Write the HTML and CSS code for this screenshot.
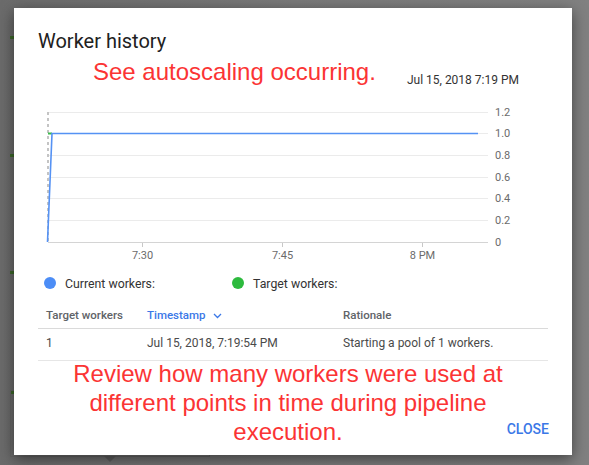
FILE: index.html
```html
<!DOCTYPE html>
<html>
<head>
<meta charset="utf-8">
<link rel="stylesheet" href="styles.css">
</head>
<body>
<div class="backdrop" aria-hidden="true">
  <span class="mark m1"></span>
  <span class="mark m2"></span>
  <span class="mark m3"></span>
  <span class="mark m4"></span>
  <span class="under-box"></span>
  <span class="under-tri"></span>
</div>
<div class="dialog">
  <h1 class="title">Worker history</h1>
  <div class="annot-row">
    <div class="annot">See autoscaling occurring.</div>
    <div class="date">Jul 15, 2018 7:19 PM</div>
  </div>
  <svg class="chart" width="510" height="162" viewBox="0 0 510 162">
    <g class="grid">
      <line x1="10" y1="10.5" x2="450" y2="10.5"/>
      <line x1="10" y1="31.5" x2="450" y2="31.5"/>
      <line x1="10" y1="53.5" x2="450" y2="53.5"/>
      <line x1="10" y1="75.5" x2="450" y2="75.5"/>
      <line x1="10" y1="96.5" x2="450" y2="96.5"/>
      <line x1="10" y1="118.5" x2="450" y2="118.5"/>
    </g>
    <line class="axis" x1="10" y1="140.5" x2="450" y2="140.5"/>
    <g class="ticks">
      <line x1="104.5" y1="141" x2="104.5" y2="145"/>
      <line x1="244.5" y1="141" x2="244.5" y2="145"/>
      <line x1="384.5" y1="141" x2="384.5" y2="145"/>
    </g>
    <g class="ylab">
      <text x="457" y="14">1.2</text>
      <text x="457" y="35">1.0</text>
      <text x="457" y="57">0.8</text>
      <text x="457" y="79">0.6</text>
      <text x="457" y="100">0.4</text>
      <text x="457" y="122">0.2</text>
      <text x="457" y="144">0</text>
    </g>
    <g class="xlab">
      <text x="104.5" y="157">7:30</text>
      <text x="244.5" y="157">7:45</text>
      <text x="384.5" y="157">8 PM</text>
    </g>
    <line class="now" x1="10" y1="10" x2="10" y2="140"/>
    <polyline class="target" points="10,31.5 14,31.5"/>
    <polyline class="current" points="9.5,140 14,31.5 440,31.5"/>
  </svg>
  <div class="legend">
    <div class="legend-item"><span class="dot dot-blue"></span>Current workers:</div>
    <div class="legend-item"><span class="dot dot-green"></span>Target workers:</div>
  </div>
  <div class="table">
    <div class="row head">
      <div class="cell">Target workers</div>
      <div class="cell sorted">Timestamp
        <svg class="chev" width="9" height="6" viewBox="0 0 9 6"><path d="M1 1 L4.5 4.5 L8 1"/></svg>
      </div>
      <div class="cell">Rationale</div>
    </div>
    <div class="row body">
      <div class="cell">1</div>
      <div class="cell">Jul 15, 2018, 7:19:54 PM</div>
      <div class="cell">Starting a pool of 1 workers.</div>
    </div>
  </div>
  <div class="footer">
    <div class="annot annot-center">Review how many workers were used at<br>different points in time during pipeline<br>execution.</div>
    <button class="close">CLOSE</button>
  </div>
</div>
</body>
</html>
```
FILE: styles.css
```css
html, body {
  margin: 0;
  height: 100%;
}
body {
  background: linear-gradient(to right, #6b6b6b, #7a7a7a 50%, #818181);
  padding: 8px 0 0 14px;
  box-sizing: border-box;
  position: relative;
  overflow: hidden;
  font-family: Roboto, "Liberation Sans", sans-serif;
}
.backdrop {
  position: absolute;
  inset: 0;
}
.mark {
  position: absolute;
  left: 10px;
  width: 4px;
  height: 3px;
  background: #3e6a2a;
}
.m1 { top: 36px; }
.m2 { top: 154px; }
.m3 { top: 271px; }
.m4 { top: 391px; }
.under-box {
  position: absolute;
  left: 10px;
  top: 390px;
  width: 200px;
  height: 67px;
  border: 1px solid #666;
  box-sizing: border-box;
}
.under-tri {
  position: absolute;
  left: 104px;
  top: 456px;
  width: 0;
  height: 0;
  border-left: 6px solid transparent;
  border-right: 6px solid transparent;
  border-top: 6px solid #5d5d5d;
}
.dialog {
  position: relative;
  width: 558px;
  height: 447px;
  box-sizing: border-box;
  background: #fff;
  padding: 21px 24px 0 24px;
  box-shadow: 0 4px 14px rgba(0, 0, 0, 0.5);
  display: flex;
  flex-direction: column;
}
.title {
  margin: 0;
  font-size: 20px;
  line-height: 24px;
  font-weight: 400;
  color: #212121;
}
.annot-row {
  margin-top: 5px;
  display: flex;
  justify-content: space-between;
  align-items: flex-start;
}
.annot {
  font-family: "Liberation Sans", Arial, sans-serif;
  font-size: 24px;
  line-height: 28px;
  color: #fb3434;
}
.annot-row .annot {
  margin-left: 55px;
}
.date {
  margin-top: 14px;
  margin-right: 29px;
  font-size: 12px;
  line-height: 16px;
  color: #333;
}
.chart {
  display: block;
  margin-top: 14px;
}
.grid line {
  stroke: #ebebeb;
  stroke-width: 1;
}
.axis {
  stroke: #d4d4d4;
  stroke-width: 1;
}
.ticks line {
  stroke: #c8c8c8;
  stroke-width: 1;
}
.ylab text, .xlab text {
  font-family: Roboto, "Liberation Sans", sans-serif;
  font-size: 11px;
  fill: #6b6b6b;
}
.xlab text {
  text-anchor: middle;
}
.now {
  stroke: #c4c4c4;
  stroke-width: 2;
  stroke-dasharray: 3 3;
}
.target {
  fill: none;
  stroke: #3cba4c;
  stroke-width: 2;
}
.current {
  fill: none;
  stroke: #5592f4;
  stroke-width: 1.6;
}
.legend {
  margin-top: 12px;
  padding-left: 6px;
  display: flex;
  height: 16px;
}
.legend-item {
  width: 188px;
  display: flex;
  align-items: center;
  font-size: 12.3px;
  line-height: 16px;
  color: #333;
}
.dot {
  width: 12px;
  height: 12px;
  border-radius: 50%;
  margin-right: 9px;
  margin-top: -2px;
}
.dot-blue { background: #4c8df6; }
.dot-green { background: #2dba3e; }
.table {
  display: flex;
  flex-direction: column;
}
.row {
  display: grid;
  grid-template-columns: 101px 196px 1fr;
  border-bottom: 1px solid #dadada;
}
.row.head {
  padding: 15px 0 5px;
  font-size: 11.5px;
  line-height: 16px;
  font-weight: 500;
  color: #5f6368;
}
.row.body {
  padding: 6px 0 9px;
  font-size: 12px;
  line-height: 16px;
  color: #4a4a4a;
  border-bottom-color: #e6e6e6;
}
.cell {
  padding-left: 8px;
  white-space: nowrap;
}
.sorted {
  color: #3b78e7;
  display: flex;
  align-items: center;
}
.chev {
  margin-left: 7px;
  margin-top: 1px;
}
.chev path {
  fill: none;
  stroke: #3b78e7;
  stroke-width: 1.3;
}
.footer {
  margin-top: -2px;
  display: grid;
}
.annot-center {
  grid-area: 1 / 1;
  text-align: center;
  line-height: 29px;
  padding-right: 10px;
}
.close {
  grid-area: 1 / 1;
  justify-self: end;
  align-self: end;
  margin-bottom: 9px;
  margin-right: -1px;
  padding: 0;
  border: 0;
  background: none;
  font-family: Roboto, "Liberation Sans", sans-serif;
  font-size: 14px;
  line-height: 16px;
  font-weight: 500;
  color: #3b78e7;
}
```
